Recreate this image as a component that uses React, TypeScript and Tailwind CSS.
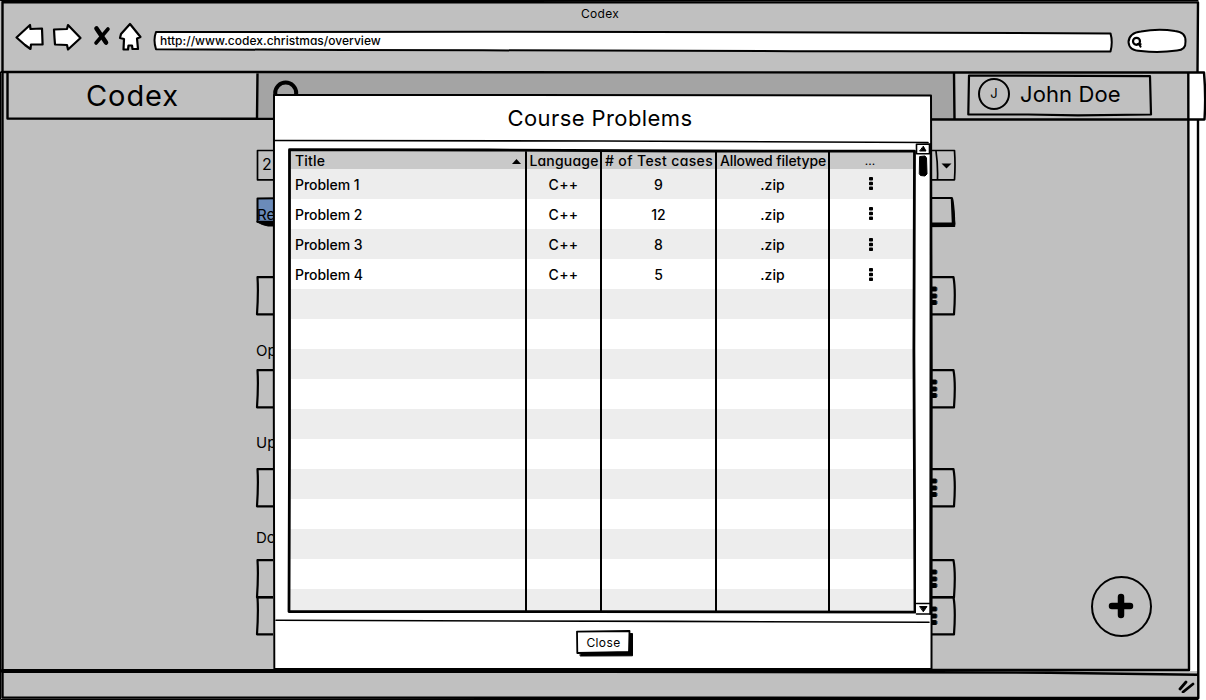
import type { ReactNode } from "react";

type SketchProps = { w: number; h: number; d: string; sw?: number; fill?: string };

/* Hand-drawn outline laid over its relatively positioned parent. */
function Sketch({ w, h, d, sw = 2, fill = "none" }: SketchProps) {
  return (
    <svg
      className="pointer-events-none absolute top-0 left-0 overflow-visible"
      width={w}
      height={h}
      viewBox={`0 0 ${w} ${h}`}
      fill={fill}
      stroke="#000"
      strokeWidth={sw}
      strokeLinejoin="round"
      strokeLinecap="round"
    >
      <path d={d} />
    </svg>
  );
}

function NavIcons() {
  return (
    <svg width="130" height="32" viewBox="14 22 130 32" fill="#fff" stroke="#000" strokeWidth="2.2" strokeLinejoin="round" strokeLinecap="round">
      <path d="M16.5 37.5 L30 25 L30.5 29 L42 28.5 L42.6 44.5 L31 44.5 L30.5 49 L25 45 Z" />
      <path d="M54 29.5 L67 29 L68 25 L80.5 38 L68 49.5 L67 45 L55 44.5 L54.5 38 Z" />
      <path d="M96.5 28.5 L106 42.5" strokeWidth="4.6" />
      <path d="M108 29 L96 43" strokeWidth="3.6" />
      <path d="M130 24 L140.5 37 L137 38.5 L138 49 L132.5 49 L132 45.5 L128.5 45.5 L128 49.5 L123.5 49.5 L124 39 L120 38 L121 34 Z" />
    </svg>
  );
}

function Toolbar() {
  return (
    <header className="flex h-[73px] w-[1198px] flex-col bg-[#c0c0c0]">
      <div className="flex h-[26px] items-center justify-center pl-[2px] text-[12px] leading-[26px] font-normal tracking-[0.3px]">
        <span className="pt-[2px]">Codex</span>
      </div>
      <div className="flex h-[32px] items-center pl-[14px]">
        <div className="-mt-[8px]">
          <NavIcons />
        </div>
        <div className="relative ml-[9px] h-[22px] w-[961px] pl-[7px] text-[12px] leading-[20px] tracking-[0.02px]">
          <Sketch w={961} h={22} fill="#fff" d="M3 1 L330 0.8 L500 1 L957.5 2.4 Q960 11 957.5 20.6 L640 20.2 L330 19.3 L190 19 L3 18.2 Q0 9 3 1 Z" />
          <span className="relative">http://www.codex.christmas/overview</span>
        </div>
        <div className="relative ml-[13px] h-[26px] w-[62px]">
          <Sketch w={62} h={26} fill="#fff" d="M14 2.5 Q31 -0.5 48 2 Q59 3 58.5 12.5 Q59 21 50 21.5 Q32 24 14 22 Q2 22 1.5 13 Q2 4 14 2.5 Z" />
          <Sketch w={62} h={26} sw={2.2} d="M13 12.3 A3.5 3.5 0 1 1 6 12.3 A3.5 3.5 0 1 1 13 12.3 M10.5 15 L13.5 15.2 M12 15 L13.5 17.5" />
        </div>
      </div>
    </header>
  );
}

function SiteHeader() {
  return (
    <div className="flex h-[46px] w-[1206px] bg-[#c0c0c0] pl-[7px] font-normal">
      <div className="flex w-[251px] items-center justify-center text-[29px] leading-[44px] tracking-[0.9px]">Codex</div>
      <div className="w-[697px] bg-[#a4a4a4] pl-[15px] pt-[7px]">
        <svg width="30" height="30" viewBox="0 0 30 30" fill="none" stroke="#000" strokeWidth="4">
          <circle cx="12.7" cy="13" r="10.5" />
          <path d="M20 21 L28 29" />
        </svg>
      </div>
      <div className="flex w-[234px] pl-[13px] pt-[2px]">
        <div className="relative flex h-[40px] w-[183px] items-center">
          <Sketch w={183} h={40} sw={2.2} d="M1 0.5 L182 1.2 L183 39.5 L110 40.4 L60 39.5 L0.3 39.5 Z" />
          <div className="-mt-[3px] ml-[10px] flex h-[32px] w-[32px] items-center justify-center rounded-full border-2 border-black text-[13px]">J</div>
          <div className="-mt-[3px] ml-[10px] text-[22px] leading-[38px] tracking-[0.12px]">John Doe</div>
        </div>
      </div>
      <div className="flex-1 bg-white" />
    </div>
  );
}

function Kebab({ big = false }: { big?: boolean }) {
  return big ? (
    <svg width="8" height="20" viewBox="0 0 8 20" fill="#000">
      <rect x="0" y="0.5" width="6" height="5" rx="1.5" />
      <rect x="0" y="7.5" width="6" height="5" rx="1.5" />
      <rect x="0" y="14" width="6" height="5" rx="1.5" />
      <path d="M6 1.5 v3 M6 8.5 v3 M6 15 v3" stroke="#16456f" strokeWidth="1" />
    </svg>
  ) : (
    <svg width="4" height="13" viewBox="0 0 4 13" fill="#000">
      <rect x="0" y="0" width="4" height="3.5" rx="0.8" />
      <rect x="0" y="4.8" width="4" height="3.5" rx="0.8" />
      <rect x="0" y="9.5" width="4" height="3.5" rx="0.8" />
    </svg>
  );
}

function CourseRow() {
  return (
    <div className="relative flex h-[38px] w-[700px] items-center justify-end pt-[1px] pr-[17px]">
      <Sketch w={700} h={38} sw={2.2} d="M1.5 1.2 L697.5 1.2 Q699.8 14 698 38.4 L1 38.3 Q2.5 16 1.5 1.2 Z" />
      <Kebab big />
    </div>
  );
}

function SectionLabel({ children }: { children: ReactNode }) {
  return <div className="h-[20px] text-[15px] leading-[22px] font-normal">{children}</div>;
}

function Courses() {
  return (
    <main className="flex w-[700px] flex-col font-normal">
      <div className="relative mt-[31px] flex h-[31px] items-center justify-between pl-[6px] text-[16px]">
        <Sketch w={700} h={31} d="M1.5 0.5 L698.5 0.5 Q699.5 15 698.5 29.8 L1.5 29.8 Z M680 1 Q682 15 681.5 29" sw={1.7} />
        <span className="-mt-[4px]">2</span>
        <svg className="mr-[4px]" width="11" height="6" viewBox="0 0 11 6"><path d="M0.5 0.5 H10.5 L5.5 5.5 Z" /></svg>
      </div>
      <div className="mt-[17px] flex h-[30px] justify-between">
        <div className="relative h-[27px] w-[80px] pt-[7px] pl-[1px] text-[15px] leading-[20px]">
          <Sketch w={80} h={27} fill="#6b8bb9" d="M1.5 0.5 L80 -0.5 L80 25 L1.5 23.5 Z" />
          <Sketch w={80} h={27} fill="#000" sw={1} d="M1 24 L80 24 L80 28 L12 28 Q6 27 1 24 Z" />
          <span className="relative">Re</span>
        </div>
        <div className="relative w-[80px]">
          <Sketch w={80} h={30} sw={1.8} d="M0 0 L76 0 L78.5 26 L0 26 Z" />
          <Sketch w={80} h={30} fill="#000" sw={1.5} d="M75.5 0.5 L76.5 25 L0 26 L0 28.8 L78.5 28.3 Q78.5 12 76.5 1 Z" />
        </div>
      </div>
      <div className="mt-[48px]"><CourseRow /></div>
      <div className="mt-[26px]"><SectionLabel>Op</SectionLabel></div>
      <div className="mt-[9px]"><CourseRow /></div>
      <div className="mt-[25px]"><SectionLabel>Up</SectionLabel></div>
      <div className="mt-[16px]"><CourseRow /></div>
      <div className="mt-[21px]"><SectionLabel>Do</SectionLabel></div>
      <div className="mt-[12px]"><CourseRow /></div>
      <div className="-mt-[1px]"><CourseRow /></div>
    </main>
  );
}

function WindowLines() {
  return (
    <>
      <Sketch
        w={1206}
        h={700}
        sw={2.4}
        d="M2.5 2.2 L1198 2.4 L1197.5 72 M2.5 2 L2.5 697.5 L1198.3 698 L1198 120 M2 72 L240 72 L950 72.5 L1204 72.5 Q1206 96 1204.5 119.5 L960 119.5 L258 118.7 L7.5 118.5 L7.5 73 M257.5 73 L257 118 M954 73 L954.5 119 M1188.3 73 L1189 670 M2 670.2 L1189 670 M2 671.7 L600 671.7 L1050 672.7 L1197 674.7"
      />
      <Sketch w={1206} h={700} sw={1} d="M0.5 0.5 L1198 0.5 M0.5 72 L0.5 699.5 L1198 699.5" />
    </>
  );
}

const rows = [
  ["Problem 1", "9"],
  ["Problem 2", "12"],
  ["Problem 3", "8"],
  ["Problem 4", "5"],
];
const blanks = Array.from({ length: 11 }, (_, i) => i);
const grid = "grid grid-cols-[237px_75px_115px_113px_84px]";

function ProblemTable() {
  return (
    <div className="relative h-[464px] w-[628px] pt-[2px] pl-[2px]">
      <div className="h-[461px] w-[624px] overflow-hidden">
        <div className={`${grid} h-[18px] bg-[#c9c9c9] text-center text-[14px] leading-[20px] whitespace-nowrap`}>
          <div className="flex items-center justify-between pr-[6px] pl-[5px] tracking-[0.2px]">
            <span>Title</span>
            <svg width="9" height="5" viewBox="0 0 9 5"><path d="M0 5 L4.5 0 L9 5 Z" /></svg>
          </div>
          <div className="-ml-[1px] tracking-[0.2px]">Language</div>
          <div className="-ml-[1px] tracking-[0.38px]"># of Test cases</div>
          <div className="-ml-[1px] -tracking-[0.1px]">Allowed filetype</div>
          <div className="pr-[4px] text-[12px] font-normal">...</div>
        </div>
        {rows.map(([title, cases], i) => (
          <div key={title} className={`${grid} h-[30px] text-center text-[14px] leading-[32px] ${i % 2 ? "bg-white" : "bg-[#ededed]"}`}>
            <div className="pl-[5px] text-left -tracking-[0.05px]">{title}</div>
            <div className="pr-[2px] tracking-[0.3px]">C++</div>
            <div className="pr-[2px]">{cases}</div>
            <div className="pr-[2px]">.zip</div>
            <div className={`flex items-center justify-center pr-[2px] ${i < 2 ? "pb-[4px]" : "pb-[1px]"}`}><Kebab /></div>
          </div>
        ))}
        {blanks.map((i) => (
          <div key={i} className={`h-[30px] ${i % 2 ? "bg-white" : "bg-[#ededed]"}`} />
        ))}
      </div>
      <Sketch w={628} h={464} sw={2.8} d="M1.5 0.7 L200 1 L400 2 L626.5 2.2 L625.9 200 L627 463.2 L300 462.6 L1 462.6 L1.5 300 Z" />
      <Sketch w={628} h={464} d="M238 3 L238 462 M313 3 L313 462 M428 3 L428 462 M541 3 L541 462" />
    </div>
  );
}

function Scrollbar() {
  return (
    <div className="relative h-[472px] w-[14px] bg-white">
      <Sketch w={14} h={472} sw={1.6} d="M0.5 0.2 L13.5 0 L13.5 9.8 L0.5 9.8 Z M0.5 459.5 L14 459.5 M0.5 470 L14 470" />
      <Sketch w={14} h={472} sw={1.8} d="M14.6 0 L14.2 470" />
      <Sketch w={14} h={472} fill="#000" sw={1} d="M7.5 2.5 L10 7 L4 7 Z M4 462.5 L11 462.5 L7.5 467.5 Z M4 12.5 L9 12 L10.5 14 L11 30 L9 32 L4.5 31.5 L3.5 30 Z" />
    </div>
  );
}

function ProblemsDialog() {
  return (
    <section role="dialog" className="absolute top-[95px] left-[273px] flex h-[574px] w-[659px] flex-col bg-white">
      <div className="h-[49px] pr-[5px] text-center text-[22px] leading-[46px] font-normal tracking-[0.4px]">Course Problems</div>
      <div className="flex h-[477px] pl-[15px]">
        <div className="pt-[5px]"><ProblemTable /></div>
        <Scrollbar />
      </div>
      <div className="flex justify-center pl-[2px] pt-[10px]">
        <button className="relative flex h-[24px] w-[55px] items-center justify-center pb-[1px] text-[12px] font-normal tracking-[0.4px]">
          <Sketch w={55} h={24} fill="#000" sw={1} d="M4.5 5 L56.5 2.5 L56.5 24.8 L4.5 25 Z" />
          <Sketch w={55} h={24} fill="#fff" sw={1.8} d="M1 0.6 L53.5 0 L53 20.8 L30 21.3 L1.3 22 Z" />
          <span className="relative">Close</span>
        </button>
      </div>
      <Sketch w={659} h={574} d="M1 0 L250 0 L658 0.5 L658.7 270 L658.5 574 L1.3 574 L0.8 300 Z" />
      <Sketch w={659} h={574} sw={1.6} d="M1 45.5 L330 46 L655 47.5 M3 525.3 L400 526.4 L656 527.3" />
    </section>
  );
}

export default function App() {
  return (
    <div className="relative flex h-[700px] w-[1206px] flex-col overflow-hidden bg-white font-['Inter',sans-serif] font-medium text-black [font-feature-settings:'cv11'_1]">
      <Toolbar />
      <SiteHeader />
      <div className="flex h-[552px] w-[1198px]">
        <div className="flex w-[1189px] justify-between bg-[#c0c0c0] pl-[256px]">
          <Courses />
          <div className="flex items-end pr-[37px] pb-[34px]">
            <div className="flex h-[61px] w-[61px] items-center justify-center rounded-full border-2 border-black">
              <svg className="-mt-[2px] -ml-[2px]" width="26" height="26" viewBox="0 0 26 26" stroke="#000" strokeWidth="6.5" strokeLinecap="round"><path d="M13 4 V22 M4 13 H22" /></svg>
            </div>
          </div>
        </div>
      </div>
      <footer className="flex h-[29px] w-[1198px] items-center justify-end bg-[#c0c0c0] pr-[3px]">
        <svg width="18" height="14" viewBox="0 0 18 14" stroke="#000" strokeWidth="2.8" strokeLinecap="round"><path d="M3 10 L9 3 M6 13 L16 5" /></svg>
      </footer>
      <WindowLines />
      <ProblemsDialog />
    </div>
  );
}
